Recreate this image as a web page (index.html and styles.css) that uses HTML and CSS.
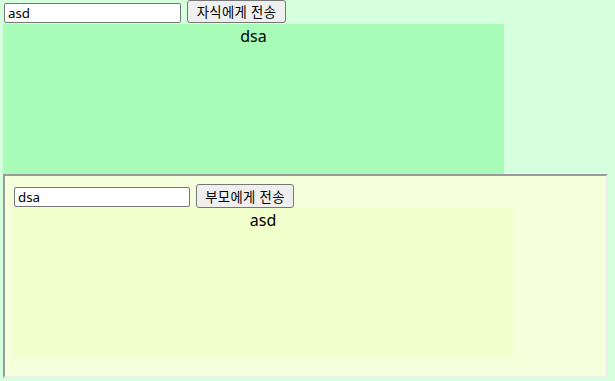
FILE: index.html
```html
<!DOCTYPE html>
<html lang="ko">

<head>
  <meta charset="utf-8">
  <title>부모 / 자식 메시지</title>
  <link rel="stylesheet" href="styles.css">
</head>

<body>
  <div class="row">
    <input class="msg" type="text" value="asd">
    <button class="send">자식에게 전송</button>
  </div>
  <div id="parentbox" class="box">dsa</div>

  <!-- child frame -->
  <div class="frame">
    <div class="framebody">
      <div class="row">
        <input class="msg" type="text" value="dsa">
        <button class="send">부모에게 전송</button>
      </div>
      <div id="childbox" class="box">asd</div>
    </div>
  </div>
</body>

</html>
```

FILE: styles.css
```css
html {
  background-color: #d5ffdd;
}

body {
  margin: 0 3px;
  font-family: "Noto Sans", "Noto Sans CJK KR", sans-serif;
}

.row {
  display: flex;
  align-items: flex-start;
  gap: 6px;
  height: 24px;
}

.msg {
  box-sizing: border-box;
  width: 177px;
  height: 20px;
  margin: 3px 0 0 1px;
  padding: 0 3px;
  border: 1px solid #767676;
  border-radius: 2px;
  background: #ffffff;
  font-family: "Noto Sans", "Noto Sans CJK KR", sans-serif;
  font-size: 13.33px;
  color: #000000;
}

.send {
  box-sizing: border-box;
  height: 23px;
  width: 99px;
  padding: 0 6px;
  border: 1px solid #767676;
  border-radius: 3px;
  background: #efefef;
  font-family: "Noto Sans CJK KR", sans-serif;
  font-size: 13.33px;
  letter-spacing: 0.3px;
  color: #000000;
}

.box {
  width: 501px;
  height: 150px;
  text-align: center;
  font-size: 16px;
  line-height: 25px;
  color: #000000;
}

#parentbox {
  background-color: #a8fcb8;
}

.frame {
  box-sizing: border-box;
  width: 605px;
  height: 204px;
  border: 2px solid;
  border-color: #9a9a9a #eeeeee #eeeeee #9a9a9a;
  background-color: #f6ffdc;
}

.framebody {
  padding: 8px;
}

.framebody .msg {
  width: 176px;
}

.framebody .send {
  width: 98px;
  height: 24px;
}

.framebody .row {
  height: 24px;
}

#childbox {
  width: 500px;
  background-color: #f0ffcc;
}
```
